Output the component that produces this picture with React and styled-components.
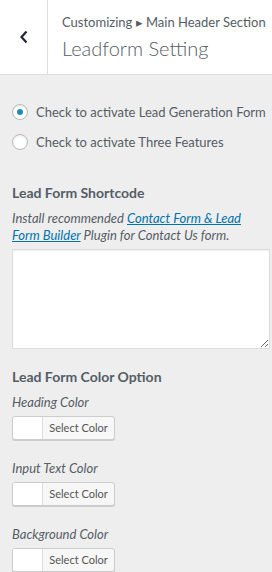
import React, { useState } from 'react';
import styled, { createGlobalStyle } from 'styled-components';

const Global = createGlobalStyle`
  html, body { margin: 0; padding: 0; background: #eeeeee; }
  body { font-family: Lato, "Noto Sans", sans-serif; color: #555d66; }
  * { box-sizing: border-box; }
`;

const Panel = styled.div`
  width: 272px;
  height: 572px;
  overflow: hidden;
  background: #eeeeee;
`;

const Header = styled.div`
  display: flex;
  height: 75px;
  background: #fff;
  border-bottom: 1px solid #dddddd;
`;

const BackButton = styled.button`
  width: 48px;
  flex: none;
  border: none;
  border-right: 1px solid #dddddd;
  background: #fff;
  display: flex;
  align-items: center;
  justify-content: center;
  padding: 0;
  color: #23282d;
  cursor: pointer;
`;

const Titles = styled.div`
  display: flex;
  flex-direction: column;
  padding: 12px 0 0 14px;
  white-space: nowrap;
  overflow: hidden;
`;

const Crumb = styled.span`
  font-size: 13px;
  line-height: 20px;
  color: #555d66;
`;

const Title = styled.h2`
  margin: 2px 0 0;
  font-size: 20px;
  font-weight: 300;
  line-height: 28px;
  color: #555d66;
`;

const Body = styled.div`
  padding: 29px 12px 0;
`;

const RadioRow = styled.label`
  display: flex;
  align-items: center;
  gap: 8px;
  height: 16px;
  margin-bottom: 14px;
  font-size: 13px;
  color: #555d66;
  white-space: nowrap;
`;

const RadioDot = styled.span`
  width: 16px;
  height: 16px;
  flex: none;
  border-radius: 50%;
  border: 1px solid #b4b9be;
  background: #fff;
  box-shadow: inset 0 1px 2px rgba(0, 0, 0, 0.1);
  display: flex;
  align-items: center;
  justify-content: center;
  &::after {
    content: '';
    width: 6px;
    height: 6px;
    border-radius: 50%;
    background: ${p => (p.$on ? '#1e8cbe' : 'transparent')};
  }
`;

const SectionTitle = styled.h3`
  margin: ${p => p.$top || 0}px 0 0;
  font-size: 14px;
  font-weight: 700;
  line-height: 20px;
  color: #555d66;
`;

const Desc = styled.p`
  margin: 7px 0 0;
  font-size: 13px;
  font-style: italic;
  line-height: 17px;
  color: #555d66;
  a { color: #0073aa; text-decoration: underline; }
`;

const TextArea = styled.textarea`
  display: block;
  width: 258px;
  height: 100px;
  margin-top: 5px;
  border: 1px solid #dddddd;
  box-shadow: inset 0 1px 2px rgba(0, 0, 0, 0.07);
  background: #fff;
  resize: both;
`;

const FieldLabel = styled.div`
  margin-top: ${p => p.$top}px;
  font-size: 13px;
  font-style: italic;
  line-height: 18px;
  color: #555d66;
`;

const ColorButton = styled.button`
  display: flex;
  margin-top: 5px;
  height: 24px;
  padding: 0;
  border: 1px solid #cccccc;
  border-radius: 3px;
  background: #f7f7f7;
  box-shadow: 0 1px 0 #cccccc;
  overflow: hidden;
  cursor: pointer;
  font-family: inherit;
`;

const Swatch = styled.span`
  width: 30px;
  height: 100%;
  background: ${p => p.$color};
  border-right: 1px solid #dddddd;
`;

const ButtonText = styled.span`
  width: 71px;
  text-align: center;
  font-size: 11px;
  line-height: 22px;
  color: #555555;
`;

const ColorField = ({ label, top }) => (
  <div>
    <FieldLabel $top={top}>{label}</FieldLabel>
    <ColorButton>
      <Swatch $color="#ffffff" />
      <ButtonText>Select Color</ButtonText>
    </ColorButton>
  </div>
);

export default function App() {
  const [choice, setChoice] = useState(0);
  return (
    <Panel>
      <Global />
      <Header>
        <BackButton>
          <svg width="10" height="14" viewBox="0 0 10 14">
            <path d="M7.5 1.5 L2.5 7 L7.5 12.5" fill="none" stroke="#23282d" strokeWidth="2.2" />
          </svg>
        </BackButton>
        <Titles>
          <Crumb>Customizing ▸ Main Header Section</Crumb>
          <Title>Leadform Setting</Title>
        </Titles>
      </Header>
      <Body>
        <RadioRow onClick={() => setChoice(0)}>
          <RadioDot $on={choice === 0} />
          Check to activate Lead Generation Form
        </RadioRow>
        <RadioRow onClick={() => setChoice(1)}>
          <RadioDot $on={choice === 1} />
          Check to activate Three Features
        </RadioRow>
        <SectionTitle $top={33}>Lead Form Shortcode</SectionTitle>
        <Desc>
          Install recommended <a href="#">Contact Form &amp; Lead Form Builder</a> Plugin for Contact Us form.
        </Desc>
        <TextArea />
        <SectionTitle $top={18}>Lead Form Color Option</SectionTitle>
        <ColorField label="Heading Color" top={6} />
        <ColorField label="Input Text Color" top={19} />
        <ColorField label="Background Color" top={19} />
      </Body>
    </Panel>
  );
}
